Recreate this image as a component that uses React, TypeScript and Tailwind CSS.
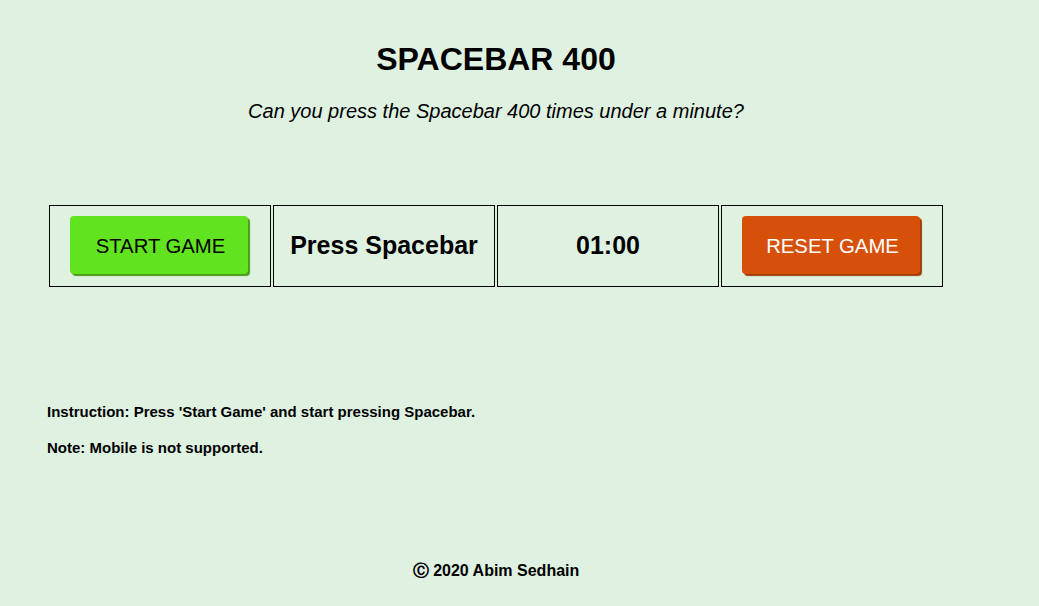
export default function App() {
  return (
    <div className="min-h-[606px] w-full bg-[#dff2e2] text-black" style={{ fontFamily: '"Liberation Sans", Arial, sans-serif' }}>
      <div className="ml-[47px] w-[898px] flex flex-col">
        <div className="mt-[39px] h-[40px] leading-[40px] text-center text-[32px] font-bold">SPACEBAR 400</div>
        <div className="mt-[18px] h-[28px] leading-[28px] text-center text-[20px] italic">Can you press the Spacebar 400 times under a minute?</div>
        <div className="mt-[78px] flex gap-[2px] p-[2px]">
          <div className="w-[222px] h-[82px] border border-black flex items-center justify-center">
            <button className="w-[180px] h-[60px] flex items-start justify-start">
              <span className="w-[178px] h-[58px] pt-[2px] pl-[3px] rounded-[4px] bg-[#62e31f] shadow-[2px_2px_1px_#4a9c17] flex items-center justify-center text-[20.3px] text-black">START GAME</span>
            </button>
          </div>
          <div className="w-[222px] h-[82px] border border-black flex items-center justify-center text-[25px] font-bold">Press Spacebar</div>
          <div className="w-[222px] h-[82px] border border-black flex items-center justify-center text-[25px] font-bold">01:00</div>
          <div className="w-[222px] h-[82px] border border-black flex items-center justify-center">
            <button className="w-[180px] h-[60px] flex items-start justify-start">
              <span className="w-[178px] h-[58px] pt-[2px] pl-[3px] rounded-[4px] bg-[#d6500a] shadow-[2px_2px_1px_#a23c05] flex items-center justify-center text-[20.3px] text-white">RESET GAME</span>
            </button>
          </div>
        </div>
        <div className="mt-[113px] h-[20px] leading-[20px] text-[15px] font-bold">Instruction: Press 'Start Game' and start pressing Spacebar.</div>
        <div className="mt-[16px] h-[20px] leading-[20px] text-[15px] font-bold">Note: Mobile is not supported.</div>
        <div className="mt-[103px] h-[20px] leading-[20px] text-center text-[16px] font-bold">Ⓒ 2020 Abim Sedhain</div>
      </div>
    </div>
  );
}
